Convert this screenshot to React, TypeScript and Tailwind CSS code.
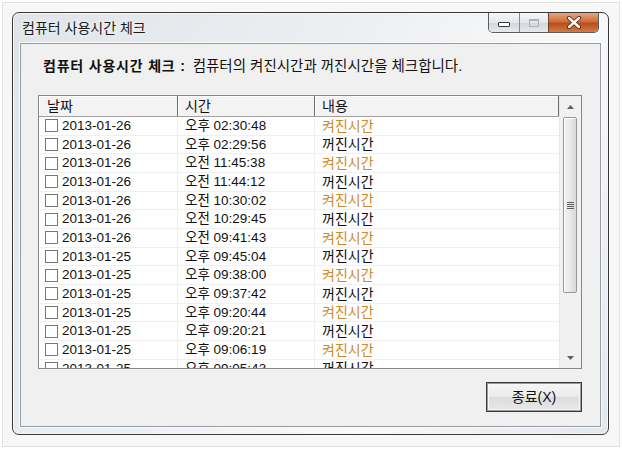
import React from 'react'

type Row = { date: string; time: string; kind: 'on' | 'off' }

const rows: Row[] = [
  { date: '2013-01-26', time: '오후 02:30:48', kind: 'on' },
  { date: '2013-01-26', time: '오후 02:29:56', kind: 'off' },
  { date: '2013-01-26', time: '오전 11:45:38', kind: 'on' },
  { date: '2013-01-26', time: '오전 11:44:12', kind: 'off' },
  { date: '2013-01-26', time: '오전 10:30:02', kind: 'on' },
  { date: '2013-01-26', time: '오전 10:29:45', kind: 'off' },
  { date: '2013-01-26', time: '오전 09:41:43', kind: 'on' },
  { date: '2013-01-25', time: '오후 09:45:04', kind: 'off' },
  { date: '2013-01-25', time: '오후 09:38:00', kind: 'on' },
  { date: '2013-01-25', time: '오후 09:37:42', kind: 'off' },
  { date: '2013-01-25', time: '오후 09:20:44', kind: 'on' },
  { date: '2013-01-25', time: '오후 09:20:21', kind: 'off' },
  { date: '2013-01-25', time: '오후 09:06:19', kind: 'on' },
  { date: '2013-01-25', time: '오후 09:05:43', kind: 'off' },
]

const font = "[font-family:'Liberation_Sans','Noto_Sans_CJK_KR',sans-serif]"

// window caption buttons (min / max / close)
const CaptionButtons = () => (
  <div className="flex h-[20px] overflow-hidden rounded-b-[5px] border border-t-0 border-[#5c5c5c] shadow-[0_1px_0_#fff]">
    <div className="flex w-[31px] items-end justify-center border-r border-[#8a8a8a] bg-[linear-gradient(#f7f8fa,#e3e6ea_50%,#d2d6db_51%,#e6e9ed)] pb-[5px]">
      <div className="h-[5px] w-[12px] rounded-[1px] border border-[#3c3c3c] bg-white" />
    </div>
    <div className="flex w-[29px] items-center justify-center border-r border-[#6a4030] bg-[linear-gradient(#f7f8fa,#e3e6ea_50%,#d2d6db_51%,#e6e9ed)]">
      <div className="h-[8px] w-[10px] border border-[#aab2bb] shadow-[inset_0_1px_0_#aab2bb]" />
    </div>
    <div className="flex w-[49px] items-center justify-center bg-[linear-gradient(#e6a47e,#cf6d38_45%,#b8501c_55%,#d47a45)]">
      <svg width="16" height="13" viewBox="0 0 16 13">
        <path d="M3 2 L13 11 M13 2 L3 11" stroke="#5a2a14" strokeWidth="4.2" strokeLinecap="round" />
        <path d="M3 2 L13 11 M13 2 L3 11" stroke="#ffffff" strokeWidth="2.4" strokeLinecap="round" />
      </svg>
    </div>
  </div>
)

const ScrollBar = () => (
  <div className="flex w-[22px] flex-col bg-[#f1f1f1] shadow-[inset_1px_0_0_#e6e6e6]">
    <div className="flex h-[21px] items-center justify-center">
      <svg width="7" height="4" viewBox="0 0 7 4">
        <path d="M0 4 L3.5 0 L7 4 Z" fill="#606060" />
      </svg>
    </div>
    <div className="mx-[4px] flex h-[176px] items-center justify-center rounded-[2px] border border-[#979797] bg-[linear-gradient(90deg,#f3f3f3,#e8e8e8_50%,#d8d8d8)] shadow-[inset_1px_1px_0_#fff]">
      <div className="flex flex-col gap-[1px]">
        <div className="h-[1px] w-[7px] bg-[#5a5a5a]" />
        <div className="h-[1px] w-[7px] bg-[#5a5a5a]" />
        <div className="h-[1px] w-[7px] bg-[#5a5a5a]" />
        <div className="h-[1px] w-[7px] bg-[#5a5a5a]" />
      </div>
    </div>
    <div className="flex-1" />
    <div className="flex h-[20px] items-center justify-center">
      <svg width="7" height="4" viewBox="0 0 7 4">
        <path d="M0 0 L3.5 4 L7 0 Z" fill="#606060" />
      </svg>
    </div>
  </div>
)

const ListView = () => (
  <div className="flex h-[274px] w-[544px] overflow-hidden border border-[#828790] bg-white">
    <div className="flex w-[520px] flex-col">
      {/* column header */}
      <div className="flex h-[21px] shrink-0 border-b border-[#a0a0a0] bg-[#f3f3f3] text-[14px] text-[#111]">
        <div className="flex w-[139px] items-center border-r border-[#6e6e6e] pl-[8px] shadow-[inset_1px_1px_0_#fff]">날짜</div>
        <div className="flex w-[137px] items-center border-r border-[#6e6e6e] pl-[7px] shadow-[inset_1px_1px_0_#fff]">시간</div>
        <div className="flex w-[244px] items-center border-r border-[#6e6e6e] pl-[7px] shadow-[inset_1px_1px_0_#fff]">내용</div>
      </div>
      {/* rows */}
      <div className="flex flex-col">
        {rows.map((r, i) => (
          <div key={i} className="flex h-[18.67px] shrink-0 border-b border-[#f0f0f0] text-[13.5px] leading-none text-[#111]">
            <div className="flex w-[139px] items-center border-r border-[#f0f0f0] pl-[6px]">
              <span className="mr-[4px] h-[13px] w-[13px] border border-[#777] bg-white" />
              {r.date}
            </div>
            <div className="flex w-[137px] items-center border-r border-[#f0f0f0] pl-[7px]">{r.time}</div>
            <div className={`flex w-[244px] items-center pl-[7px] text-[14px] ${r.kind === 'on' ? 'text-[#cd8a2a]' : 'text-[#111]'}`}>
              {r.kind === 'on' ? '켜진시간' : '꺼진시간'}
            </div>
          </div>
        ))}
      </div>
    </div>
    <ScrollBar />
  </div>
)

export default function App() {
  return (
    <div className={`h-[449px] w-[622px] bg-[#f7f7f7] pl-[12px] pt-[12px] shadow-[inset_0_0_0_2px_#fff,inset_0_0_0_3px_#e2e2e2] ${font}`}>
      {/* window */}
      <div className="flex h-[423px] w-[597px] flex-col rounded-[7px] border border-[#3a3a3a] bg-[linear-gradient(120deg,#e0e4e8_0%,#eceff2_40%,#f8f9fa_70%,#e4e7ea_100%)] shadow-[inset_0_0_0_1px_#f6f7f8]">
        {/* title bar */}
        <div className="flex h-[30px] shrink-0 items-start justify-between">
          <span className="pl-[9px] pt-[6px] text-[14px] leading-[18px] text-[#1b1b1b] [text-shadow:0_0_6px_#fff]">컴퓨터 사용시간 체크</span>
          <div className="mr-[9px]">
            <CaptionButtons />
          </div>
        </div>
        {/* client area */}
        <div className="mx-[7px] mb-[7px] flex h-[384px] flex-col border border-[#979ca3] bg-[#f0f0f0] shadow-[0_0_0_1px_#fbfbfb]">
          <div className="flex h-[51px] items-start pl-[22px] pt-[12px] leading-[20px] text-[#111]">
            <span className="text-[14px] font-bold tracking-[0.8px]">컴퓨터 사용시간 체크 :</span>
            <span className="ml-[7px] text-[14.5px]">컴퓨터의 켜진시간과 꺼진시간을 체크합니다.</span>
          </div>
          <div className="pl-[17px]">
            <ListView />
          </div>
          <div className="mt-[13px] flex w-[561px] justify-end">
            <button className="flex h-[30px] w-[96px] items-center justify-center border border-[#3c3c3c] bg-[linear-gradient(#f6f6f6,#ebebeb_50%,#dddddd_51%,#e8e8e8)] text-[14px] text-[#111] shadow-[inset_0_0_0_1px_#9a9a9a,inset_0_0_0_2px_#f8f8f8]">
              종료(X)
            </button>
          </div>
        </div>
      </div>
    </div>
  )
}
